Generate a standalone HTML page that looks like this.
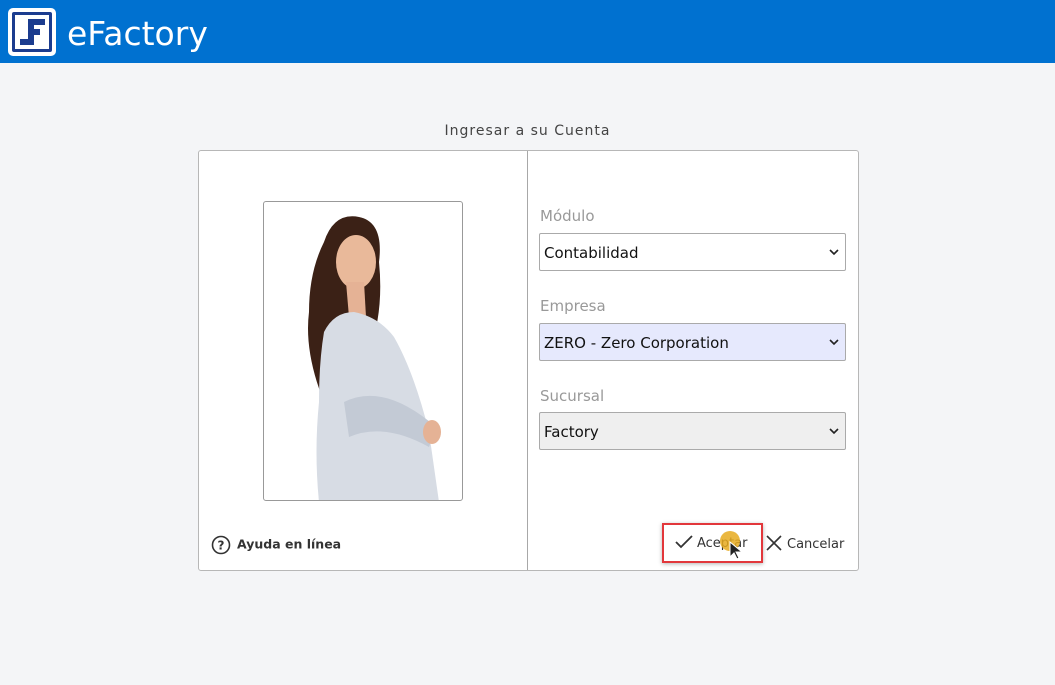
<!DOCTYPE html>
<html><head><meta charset="utf-8"><style>
*{margin:0;padding:0;box-sizing:border-box}
body{width:1055px;height:685px;background:#f4f5f7;font-family:"Liberation Sans","DejaVu Sans",sans-serif;position:relative;overflow:hidden}
.hdr{position:absolute;left:0;top:0;width:1055px;height:63px;background:#0071d0}
.logo{position:absolute;left:8px;top:8px;width:48px;height:48px;background:#fff;border-radius:5px}
.logo .in{position:absolute;left:4px;top:4px;width:40px;height:40px;border:3px solid #1b3c8f;border-radius:2px}
.title{position:absolute;left:67px;top:14px;color:#fff;font-size:33px;font-family:"DejaVu Sans",sans-serif}
.cap{position:absolute;left:0;width:1055px;top:123px;text-align:center;font-size:14px;color:#444;letter-spacing:1px;font-family:"DejaVu Sans",sans-serif}
.box{position:absolute;left:198px;top:150px;width:661px;height:421px;background:#fff;border:1px solid #b7b7b7;border-radius:3px}
.div{position:absolute;left:328px;top:0;width:1px;height:419px;background:#a8a8a8}
.photo{position:absolute;left:64px;top:50px;width:200px;height:300px;border:1px solid #999;border-radius:3px;overflow:hidden;background:#fff}
.lbl{position:absolute;left:341px;font-size:15px;color:#999;font-family:"DejaVu Sans",sans-serif}
.sel{position:absolute;left:340px;width:307px;height:38px;border:1px solid #aaa;border-radius:2px;font-size:15px;padding:10px 4px;color:#111;font-family:"DejaVu Sans",sans-serif}
.sel svg{position:absolute;right:6px;top:15px}
.help{position:absolute;left:12px;top:384px;font-size:12.5px;font-weight:bold;color:#333;font-family:"DejaVu Sans",sans-serif}
.btn{position:absolute;font-size:13px;color:#333;font-family:"DejaVu Sans",sans-serif}
</style></head><body>
<div class="hdr"><div class="logo"><div class="in">
<svg width="34" height="34" viewBox="0 0 34 34" style="position:absolute;left:0;top:0"><path d="M13 4h17v6H19v4h6v6h-6v10H5v-6h8V4z" fill="#1b3c8f"/></svg>
</div></div><div class="title">eFactory</div></div>
<div class="cap">Ingresar a su Cuenta</div>
<div class="box">
<div class="photo">
<svg width="200" height="300" viewBox="0 0 200 300">
<path d="M60 40 Q70 10 95 15 Q120 20 115 60 Q120 110 105 150 L60 200 Q40 150 45 110 Q45 70 60 40Z" fill="#3b2116"/>
<ellipse cx="92" cy="60" rx="20" ry="27" fill="#e9b99a"/>
<path d="M82 80 L100 80 L102 115 L85 115Z" fill="#e5b295"/>
<path d="M60 130 Q70 110 90 110 Q115 115 130 135 Q150 170 165 230 L175 300 L55 300 Q50 250 55 200 Q55 160 60 130Z" fill="#d7dce4"/>
<path d="M80 200 Q120 180 172 225 L165 245 Q120 220 85 235Z" fill="#c3cad5"/>
<ellipse cx="168" cy="230" rx="9" ry="12" fill="#e5b295"/>
</svg></div>
<div class="div"></div>
<div class="lbl" style="top:56px">Módulo</div>
<div class="sel" style="top:82px;background:#fff">Contabilidad<svg width="10" height="7"><path d="M1 1l4 4 4-4" stroke="#222" stroke-width="1.6" fill="none"/></svg></div>
<div class="lbl" style="top:146px">Empresa</div>
<div class="sel" style="top:172px;background:#e6e9fd">ZERO - Zero Corporation<svg width="10" height="7"><path d="M1 1l4 4 4-4" stroke="#222" stroke-width="1.6" fill="none"/></svg></div>
<div class="lbl" style="top:236px">Sucursal</div>
<div class="sel" style="top:261px;background:#efefef">Factory<svg width="10" height="7"><path d="M1 1l4 4 4-4" stroke="#222" stroke-width="1.6" fill="none"/></svg></div>
<div class="help"><svg width="20" height="20" style="vertical-align:middle;margin-right:6px"><circle cx="10" cy="10" r="8.5" stroke="#333" stroke-width="1.6" fill="none"/><text x="10" y="14.5" font-size="12" font-weight="bold" text-anchor="middle" fill="#333" font-family="DejaVu Sans">?</text></svg>Ayuda en línea</div>
<div style="position:absolute;left:463px;top:372px;width:101px;height:40px;border:2px solid #e2373b;box-shadow:0 1px 4px rgba(0,0,0,.3)"></div>
<div class="btn" style="left:476px;top:384px"><svg width="18" height="14" style="vertical-align:-2px;margin-right:4px"><path d="M1 7l5 5 11-11" stroke="#333" stroke-width="1.8" fill="none"/></svg>Aceptar</div>
<div style="position:absolute;left:521px;top:380px;width:20px;height:20px;border-radius:50%;background:rgba(230,170,30,.85)"></div>
<svg style="position:absolute;left:530px;top:390px" width="14" height="20"><path d="M1 1v15l4-4 3 6 2-1-3-6h6z" fill="#222" stroke="#fff" stroke-width="1"/></svg>
<div class="btn" style="left:567px;top:384px"><svg width="16" height="16" style="vertical-align:-3px;margin-right:5px"><path d="M1 1l14 14M15 1L1 15" stroke="#333" stroke-width="1.6"/></svg>Cancelar</div>
</div>
</body></html>
